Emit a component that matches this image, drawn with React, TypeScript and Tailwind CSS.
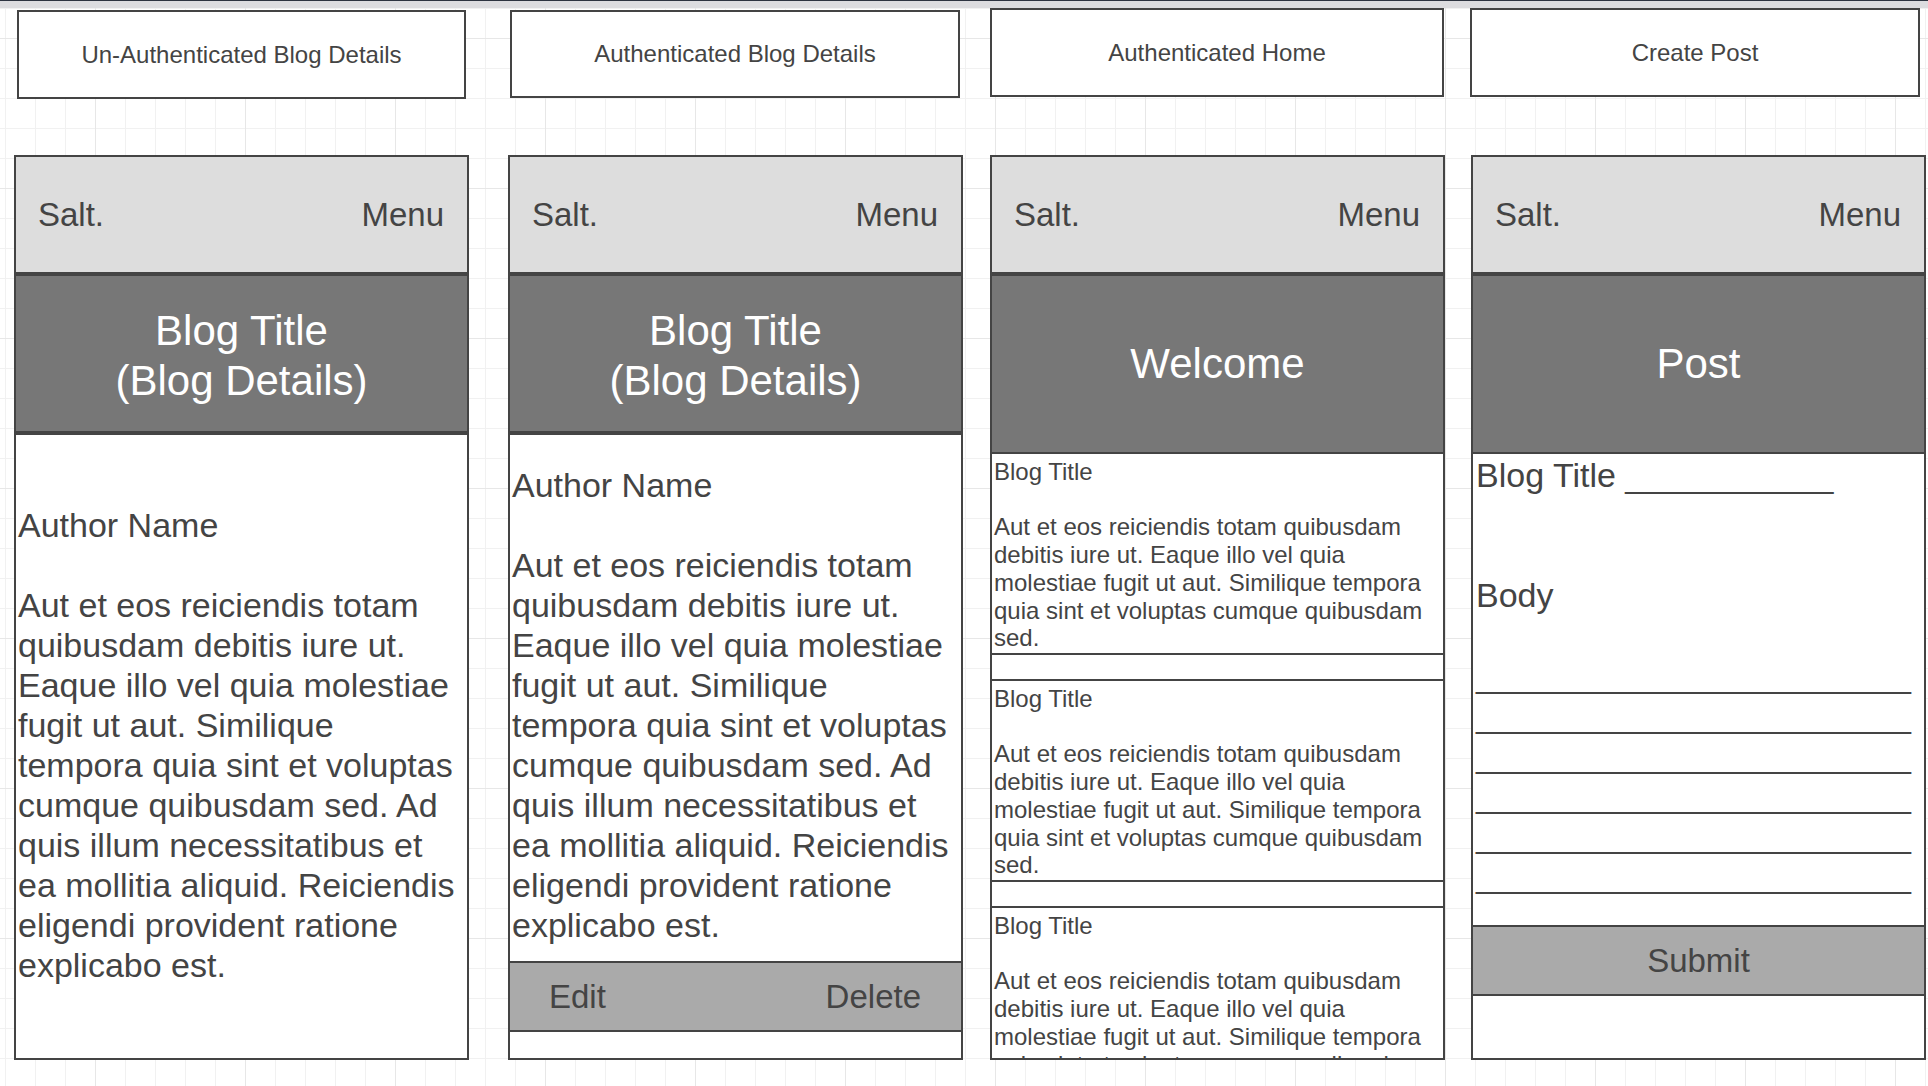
import clsx from 'clsx';
import type { ReactNode } from 'react';

const bodyLines = [
    'Aut et eos reiciendis totam',
    'quibusdam debitis iure ut.',
    'Eaque illo vel quia molestiae',
    'fugit ut aut. Similique',
    'tempora quia sint et voluptas',
    'cumque quibusdam sed. Ad',
    'quis illum necessitatibus et',
    'ea mollitia aliquid. Reiciendis',
    'eligendi provident ratione',
    'explicabo est.',
];

const cardLines = [
    'Aut et eos reiciendis totam quibusdam',
    'debitis iure ut. Eaque illo vel quia',
    'molestiae fugit ut aut. Similique tempora',
    'quia sint et voluptas cumque quibusdam',
    'sed.',
];

function Label({ text, className }: { text: string; className?: string }) {
    return (
        <div
            className={clsx(
                'flex items-center justify-center border-2 border-[#444] bg-white text-[24px] text-[#444]',
                className
            )}
        >
            {text}
        </div>
    );
}

function Phone({ className, children }: { className?: string; children: ReactNode }) {
    return (
        <div
            className={clsx(
                'flex h-[905px] w-[455px] flex-col overflow-hidden border-2 border-[#444] bg-white',
                className
            )}
        >
            {children}
        </div>
    );
}

function TopBar() {
    return (
        <div className="flex h-[119px] shrink-0 items-center justify-between border-b-4 border-[#444] bg-[#ddd] pr-[23px] pl-[22px] text-[33px] text-[#444]">
            <span>Salt.</span>
            <span>Menu</span>
        </div>
    );
}

function Banner({ tall, children }: { tall?: boolean; children: ReactNode }) {
    return (
        <div
            className={clsx(
                'flex shrink-0 flex-col items-center justify-center bg-[#777] text-center text-[42px] leading-[1.18] text-white',
                tall ? 'h-[178px] border-b-2 border-[#444]' : 'h-[159px] border-b-4 border-[#444] pt-[4px]'
            )}
        >
            {children}
        </div>
    );
}

function Article({ className }: { className?: string }) {
    return (
        <div className={clsx('pl-[2px] text-[34px] leading-[40px] whitespace-nowrap text-[#444]', className)}>
            <div>Author Name</div>
            <div className="h-[40px]" />
            {bodyLines.map((line) => (
                <div key={line}>{line}</div>
            ))}
        </div>
    );
}

function PostCard({ className }: { className?: string }) {
    return (
        <div
            className={clsx(
                'shrink-0 overflow-hidden pt-[4px] pl-[2px] text-[24px] leading-[27.7px] whitespace-nowrap text-[#444]',
                className
            )}
        >
            <div>Blog Title</div>
            <div className="h-[27.7px]" />
            {cardLines.map((line) => (
                <div key={line}>{line}</div>
            ))}
        </div>
    );
}

function ActionBar({ children, className }: { children: ReactNode; className?: string }) {
    return (
        <div
            className={clsx(
                'flex h-[71px] shrink-0 items-center border-y-2 border-[#444] bg-[#aaa] text-[33px] text-[#444]',
                className
            )}
        >
            {children}
        </div>
    );
}

export default function App() {
    const rule = '_______________________';

    return (
        <div className="h-[1086px] w-full overflow-hidden bg-white bg-[linear-gradient(to_right,#e7e7e7_1px,transparent_1px),linear-gradient(to_bottom,#e7e7e7_1px,transparent_1px),linear-gradient(to_right,#f1f1f1_1px,transparent_1px),linear-gradient(to_bottom,#f1f1f1_1px,transparent_1px)] bg-[size:150px_150px,150px_150px,30px_30px,30px_30px] bg-[position:95px_38px,95px_38px,5px_8px,5px_8px] font-['Liberation_Sans',Arial,sans-serif]">
            <div className="h-[8px] border-t border-[#2d3340] bg-[#dcdcdf]" />

            <div className="flex pl-[14px]">
                {/* un-authenticated details */}
                <div className="flex w-[455px] flex-col">
                    <Label text="Un-Authenticated Blog Details" className="mt-[2px] ml-[3px] h-[89px] w-[449px]" />
                    <Phone className="mt-[56px]">
                        <TopBar />
                        <Banner>
                            <span>Blog Title</span>
                            <span>(Blog Details)</span>
                        </Banner>
                        <Article className="pt-[70px]" />
                    </Phone>
                </div>

                {/* authenticated details */}
                <div className="ml-[39px] flex w-[455px] flex-col">
                    <Label text="Authenticated Blog Details" className="mt-[2px] ml-[2px] h-[88px] w-[450px]" />
                    <Phone className="mt-[57px]">
                        <TopBar />
                        <Banner>
                            <span>Blog Title</span>
                            <span>(Blog Details)</span>
                        </Banner>
                        <Article className="h-[526px] shrink-0 pt-[30px]" />
                        <ActionBar className="justify-between pr-[40px] pl-[39px]">
                            <span>Edit</span>
                            <span>Delete</span>
                        </ActionBar>
                    </Phone>
                </div>

                {/* home */}
                <div className="ml-[27px] flex w-[455px] flex-col">
                    <Label text="Authenticated Home" className="h-[89px] w-[454px]" />
                    <Phone className="mt-[58px]">
                        <TopBar />
                        <Banner tall>Welcome</Banner>
                        <PostCard className="h-[201px] border-b-2 border-[#444]" />
                        <div className="h-[26px] shrink-0 border-b-2 border-[#444]" />
                        <PostCard className="h-[201px] border-b-2 border-[#444]" />
                        <div className="h-[26px] shrink-0 border-b-2 border-[#444]" />
                        <PostCard className="flex-1" />
                    </Phone>
                </div>

                {/* create post */}
                <div className="ml-[26px] flex w-[455px] flex-col">
                    <Label text="Create Post" className="-ml-[1px] h-[89px] w-[450px]" />
                    <Phone className="mt-[58px]">
                        <TopBar />
                        <Banner tall>Post</Banner>
                        <div className="h-[471px] shrink-0 pt-[1px] pl-[3px] text-[34px] leading-[40px] whitespace-nowrap text-[#444]">
                            <div>Blog Title ___________</div>
                            <div className="h-[80px]" />
                            <div>Body</div>
                            <div className="h-[40px]" />
                            {[0, 1, 2, 3, 4, 5].map((i) => (
                                <div key={i}>{rule}</div>
                            ))}
                        </div>
                        <ActionBar className="justify-center">Submit</ActionBar>
                    </Phone>
                </div>
            </div>
        </div>
    );
}
